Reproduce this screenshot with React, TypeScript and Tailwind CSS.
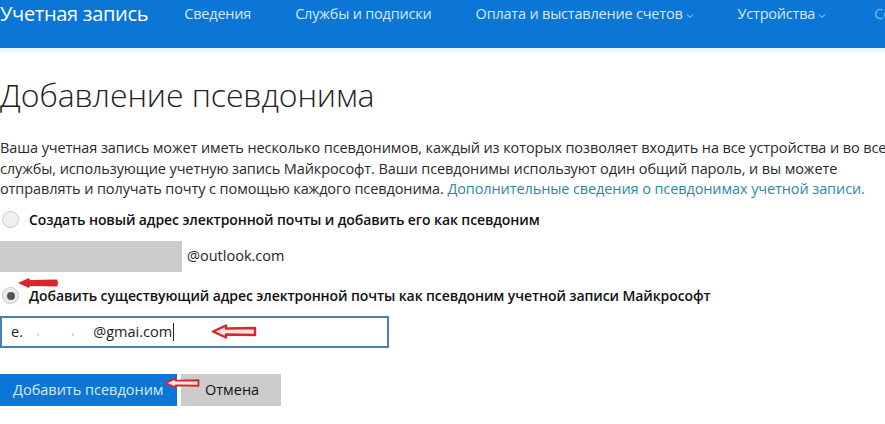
import React from "react";

const F = { fontFamily: '"Open Sans", "Noto Sans", sans-serif' };

function Chevron() {
  return (
    <svg width="8" height="6" viewBox="0 0 8 6" className="ml-[3px] mt-[3px]">
      <path d="M1 1.5 L4 4.5 L7 1.5" fill="none" stroke="#bcd9f5" strokeWidth="1" />
    </svg>
  );
}

function RedArrowFilled() {
  return (
    <svg width="42" height="12" viewBox="0 0 42 12" className="absolute left-[17px] top-[-8px]">
      <path d="M1 6 L12 1 L13 3 L40 2.5 Q42 6 40 9.5 L13 9 L12 11 Z" fill="#d9262c" />
    </svg>
  );
}

function RedArrowOutline({ w = 46, h = 15 }: { w?: number; h?: number }) {
  return (
    <svg width={w} height={h} viewBox="0 0 46 15">
      <path
        d="M2 7.5 L15 1.5 L15 4.5 L44 4 L44 11 L15 10.5 L15 13.5 Z"
        fill="#fbe3e4"
        stroke="#d9262c"
        strokeWidth="2.4"
        strokeLinejoin="round"
      />
    </svg>
  );
}

export default function App() {
  return (
    <div className="w-[885px] h-[424px] overflow-hidden bg-white text-[#1a1a1a]" style={F}>
      <div className="h-[48px] bg-[#0b76d6] flex items-start pt-[2px] whitespace-nowrap">
        <span className="text-white text-[20px] leading-[24px] tracking-[-0.3px]">Учетная запись</span>
        <div className="flex items-start text-[14.5px] leading-[24px] text-[#d6e9fb] ml-[36px] gap-[44px] tracking-[-0.2px]">
          <span>Сведения</span>
          <span>Службы и подписки</span>
          <span className="flex items-center">Оплата и выставление счетов<Chevron /></span>
          <span className="flex items-center">Устройства<Chevron /></span>
          <span className="text-[#7fb6ea] ml-[4px]">Се</span>
        </div>
      </div>
      <div className="h-[4px] bg-[#eef6fd]" />
      <h1 className="mt-[24px] text-[32px] leading-[38px] font-light text-[#222] tracking-[-0.1px]">Добавление псевдонима</h1>
      <p className="mt-[24px] text-[14.5px] leading-[20.5px] text-[#2a2a2a] whitespace-nowrap tracking-[-0.1px]">
        Ваша учетная запись может иметь несколько псевдонимов, каждый из которых позволяет входить на все устройства и во все
        <br />
        службы, использующие учетную запись Майкрософт. Ваши псевдонимы используют один общий пароль, и вы можете
        <br />
        отправлять и получать почту с помощью каждого псевдонима.{" "}
        <span className="text-[#2a8aa8]">Дополнительные сведения о псевдонимах учетной записи.</span>
      </p>
      <div className="mt-[9px] flex items-center h-[22px]">
        <span className="w-[17px] h-[17px] rounded-full border border-[#c8c8c8] bg-[#f0f0f0] ml-[2px]" />
        <span className="ml-[10px] text-[14px] font-semibold text-[#111] tracking-[-0.1px]">
          Создать новый адрес электронной почты и добавить его как псевдоним
        </span>
      </div>
      <div className="mt-[10px] flex items-center h-[31px]">
        <div className="w-[182px] h-[31px] bg-[#cccccc]" />
        <span className="ml-[5px] text-[14.5px] text-[#222]">@outlook.com</span>
      </div>
      <div className="relative mt-[13px] flex items-center h-[22px]">
        <RedArrowFilled />
        <span className="w-[17px] h-[17px] rounded-full border border-[#c8c8c8] bg-[#ececec] ml-[2px] flex items-center justify-center">
          <span className="w-[8px] h-[8px] rounded-full bg-[#555]" />
        </span>
        <span className="ml-[10px] text-[14px] font-semibold text-[#111] tracking-[-0.1px]">
          Добавить существующий адрес электронной почты как псевдоним учетной записи Майкрософт
        </span>
      </div>
      <div className="mt-[9px] flex items-center">
        <div className="w-[389px] h-[32px] border-2 border-[#4a7fb6] flex items-center pl-[9px] text-[14.5px] text-[#222] relative">
          <span>e.</span>
          <span className="ml-[14px] text-[#aaa] text-[10px]">,</span>
          <span className="ml-[32px] text-[#aaa] text-[10px]">,</span>
          <span className="ml-[19px]">@gmai.com</span>
          <span className="w-[1px] h-[18px] bg-[#222] ml-[1px]" />
          <span className="ml-[37px] flex items-center">
            <RedArrowOutline />
          </span>
        </div>
      </div>
      <div className="mt-[26px] flex items-center">
        <div className="relative w-[177px] h-[32px] bg-[#0b76d6] text-[#d8ebfb] text-[14.5px] flex items-center pl-[13px]">
          Добавить псевдоним
          <span className="absolute left-[164px] top-[2px]">
            <RedArrowOutline w={36} h={14} />
          </span>
        </div>
        <div className="ml-[4px] w-[100px] h-[32px] bg-[#cccccc] text-[14.5px] text-[#111] flex items-center pl-[24px]">
          Отмена
        </div>
      </div>
    </div>
  );
}
